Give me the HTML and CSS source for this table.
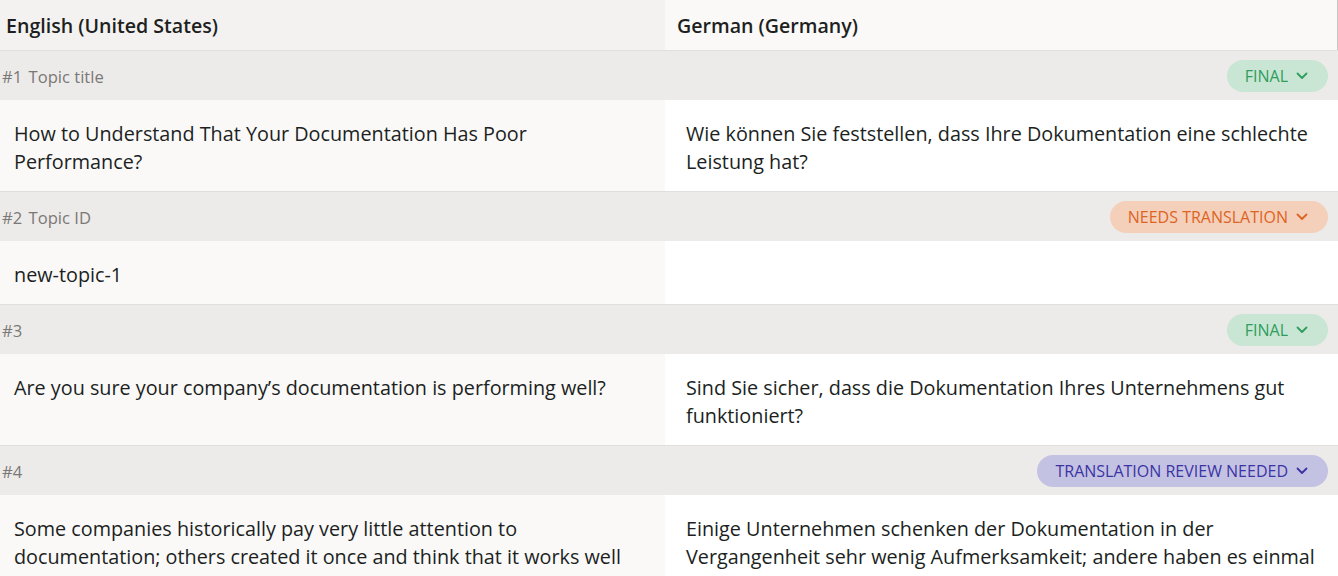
FILE: index.html
```html
<!DOCTYPE html>
<html lang="en">
<head>
<meta charset="utf-8">
<title>Translation editor</title>
<link rel="stylesheet" href="styles.css">
</head>
<body>
<div class="table">
  <div class="colheads">
    <div class="colhead src">English (United States)</div>
    <div class="colhead tgt">German (Germany)</div>
  </div>

  <div class="rowhead">
    <div class="label"><span class="num">#1</span> Topic title</div>
    <button class="badge final">FINAL <svg viewBox="0 0 12 8" class="chev"><path d="M1.5 1.5 L6 6 L10.5 1.5"/></svg></button>
  </div>
  <div class="content">
    <div class="cell src">How to Understand That Your Documentation Has Poor Performance?</div>
    <div class="cell tgt">Wie können Sie feststellen, dass Ihre Dokumentation eine schlechte Leistung hat?</div>
  </div>

  <div class="rowhead">
    <div class="label"><span class="num">#2</span> Topic ID</div>
    <button class="badge needs">NEEDS TRANSLATION <svg viewBox="0 0 12 8" class="chev"><path d="M1.5 1.5 L6 6 L10.5 1.5"/></svg></button>
  </div>
  <div class="content">
    <div class="cell src">new-topic-1</div>
    <div class="cell tgt"></div>
  </div>

  <div class="rowhead">
    <div class="label"><span class="num">#3</span></div>
    <button class="badge final">FINAL <svg viewBox="0 0 12 8" class="chev"><path d="M1.5 1.5 L6 6 L10.5 1.5"/></svg></button>
  </div>
  <div class="content">
    <div class="cell src">Are you sure your company’s documentation is performing well?</div>
    <div class="cell tgt">Sind Sie sicher, dass die Dokumentation Ihres Unternehmens gut funktioniert?</div>
  </div>

  <div class="rowhead">
    <div class="label"><span class="num">#4</span></div>
    <button class="badge review">TRANSLATION REVIEW NEEDED <svg viewBox="0 0 12 8" class="chev"><path d="M1.5 1.5 L6 6 L10.5 1.5"/></svg></button>
  </div>
  <div class="content">
    <div class="cell src">Some companies historically pay very little attention to documentation; others created it once and think that it works well</div>
    <div class="cell tgt">Einige Unternehmen schenken der Dokumentation in der Vergangenheit sehr wenig Aufmerksamkeit; andere haben es einmal erstellt</div>
  </div>
</div>
</body>
</html>
```

FILE: styles.css
```css
html, body {
  margin: 0;
  padding: 0;
  background: #ffffff;
  overflow: hidden;
}
body {
  font-family: "Open Sans", "Noto Sans", sans-serif;
  color: #201f1e;
}
.table {
  width: 1338px;
}
.colheads {
  display: grid;
  grid-template-columns: 665px 1fr;
  height: 50px;
  border-bottom: 1px solid #e1dfdd;
}
.colhead {
  display: flex;
  align-items: center;
  font-size: 19.6px;
  font-weight: 600;
  color: #201f1e;
}
.colhead.src {
  background: #f3f2f1;
  padding-left: 6px;
}
.colhead.tgt {
  background: #faf9f8;
  padding-left: 12px;
  border-right: 1px solid #c8c6c4;
}
.rowhead {
  display: flex;
  align-items: center;
  justify-content: space-between;
  height: 49px;
  background: #edebe9;
  padding: 0 10px 0 2px;
}
.label {
  font-size: 16.6px;
  color: #7a7876;
  padding-top: 1px;
}
.num {
  margin-right: 2px;
}
.badge {
  display: flex;
  align-items: center;
  gap: 8px;
  height: 32px;
  padding: 0 20px 0 18px;
  border: none;
  border-radius: 16px;
  font-family: inherit;
  font-size: 16px;
  cursor: pointer;
}
.chev {
  width: 12px;
  height: 8px;
  fill: none;
  stroke: currentColor;
  stroke-width: 1.8;
  stroke-linecap: round;
  stroke-linejoin: round;
}
.badge.final {
  background: #c9e6d4;
  color: #2e9d5d;
}
.badge.needs {
  background: #f4d0bb;
  color: #de6422;
}
.badge.review {
  background: #c4c2e3;
  color: #3b34a3;
}
.content {
  display: grid;
  grid-template-columns: 665px 1fr;
  border-bottom: 1px solid #e1dfdd;
}
.cell {
  font-size: 19.8px;
  line-height: 28px;
  padding: 20px 30px 15px 14px;
  min-height: 28px;
}
.cell.src {
  background: #faf9f8;
}
.cell.tgt {
  background: #ffffff;
  padding-left: 21px;
  padding-right: 16px;
}
```
